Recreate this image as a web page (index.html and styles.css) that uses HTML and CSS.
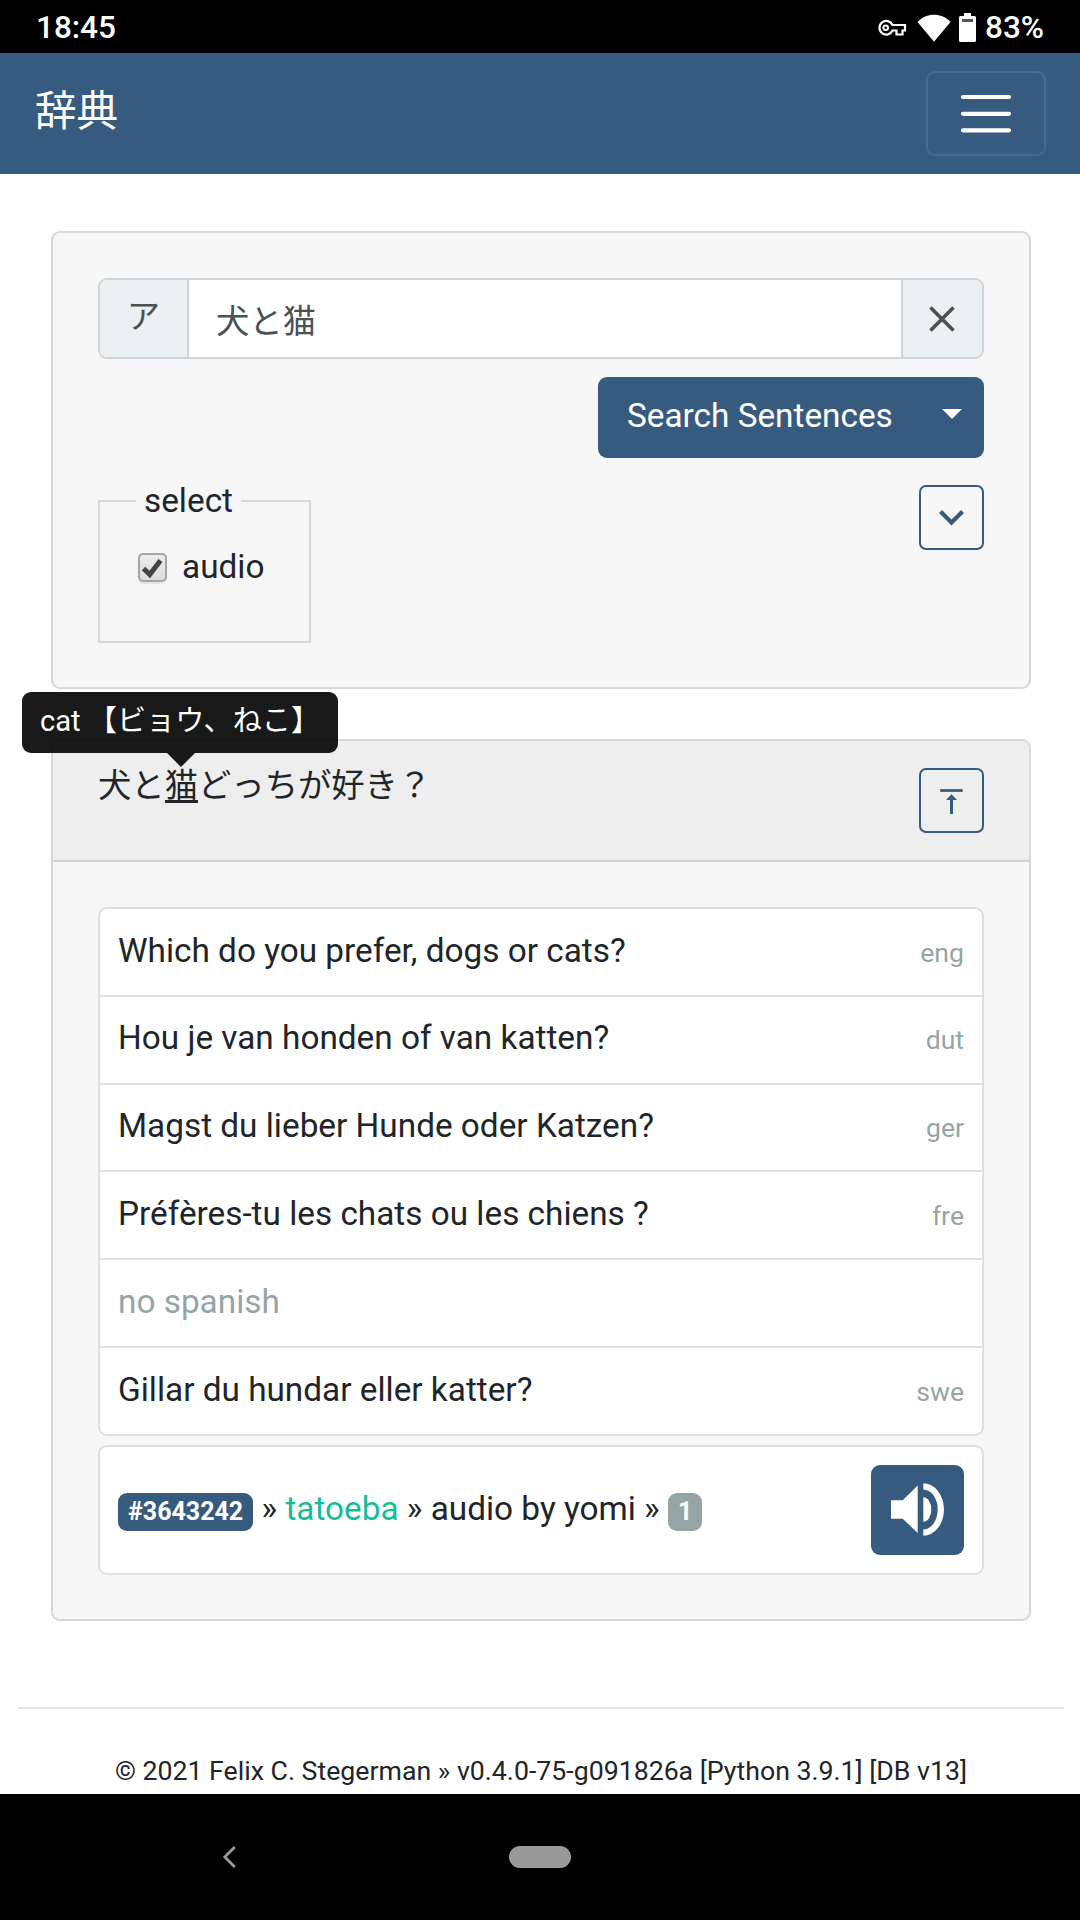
FILE: index.html
```html
<!DOCTYPE html>
<html lang="ja">
<head>
<meta charset="utf-8">
<title>辞典</title>
<link rel="stylesheet" href="styles.css">
</head>
<body>
<div class="statusbar">
  <span class="clock">18:45</span>
  <div class="status-icons">
    <svg class="key" viewBox="0 0 30 18"><path d="M15.500 6H28V11.500H25.500V15.500H19.500V11.500H15.500A6.800 6.800 0 1 1 15.500 6Z" fill="none" stroke="#fff" stroke-width="2.200"/><circle cx="8.700" cy="8.800" r="2.300" fill="none" stroke="#fff" stroke-width="2"/></svg>
    <svg class="wifi" viewBox="0 0 34 28"><path d="M0.500 8C9.500-1.700 24.500-1.700 33.500 8L17 27.700Z" fill="#fff"/></svg>
    <svg class="battery" viewBox="0 0 17 29"><path d="M5 0H12V3H15.500Q17 3 17 4.500V27.500Q17 29 15.500 29H1.500Q0 29 0 27.500V4.500Q0 3 1.500 3H5Z" fill="#fff"/><path d="M3 6H14V9H3Z" fill="#555"/></svg>
    <span class="percent">83%</span>
  </div>
</div>
<nav class="navbar">
  <a class="brand">辞典</a>
  <button class="toggler" aria-label="menu"><svg viewBox="0 0 62 62"><path d="M8 14H54M8 30.800H54M8 47.300H54" stroke="#fff" stroke-width="4.200" stroke-linecap="round"/></svg></button>
</nav>
<main>
  <section class="card search">
    <div class="input-group">
      <span class="addon kana">ア</span>
      <span class="query">犬と猫</span>
      <button class="addon clear" aria-label="clear"><svg viewBox="0 0 26 26"><path d="M1.500 1.500L24.500 24.500M24.500 1.500L1.500 24.500" stroke="#495057" stroke-width="3.600"/></svg></button>
    </div>
    <div class="search-row">
      <div class="btn-group"><button class="search-btn">Search Sentences</button><button class="caret" aria-label="more"></button></div>
    </div>
    <div class="options">
      <fieldset>
        <legend>select</legend>
        <label><span class="checkbox"><svg viewBox="0 0 29 29"><path d="M5.500 15.500L11.800 21.500L22.500 7.500" fill="none" stroke="#444" stroke-width="5"/></svg></span>audio</label>
      </fieldset>
      <button class="outline-btn" aria-label="expand"><svg viewBox="0 0 65 65"><path d="M21.500 26.500L32.500 37.500L43.500 26.500" fill="none" stroke="#375a7f" stroke-width="4.200"/></svg></button>
    </div>
  </section>

  <section class="card result">
    <header>
      <div class="sentence">犬と<span class="word">猫<span class="tooltip">cat 【ビョウ、ねこ】</span></span>どっちが好き？</div>
      <button class="outline-btn" aria-label="top"><svg viewBox="0 0 65 65"><path d="M21.200 22.500H43.700" stroke="#375a7f" stroke-width="2.800"/><path d="M31 46V32H27L32.500 26.300L38 32H34V46Z" fill="#375a7f"/></svg></button>
    </header>
    <div class="card-body">
      <ul class="translations">
        <li>Which do you prefer, dogs or cats?<small>eng</small></li>
        <li>Hou je van honden of van katten?<small>dut</small></li>
        <li>Magst du lieber Hunde oder Katzen?<small>ger</small></li>
        <li>Préfères-tu les chats ou les chiens ?<small>fre</small></li>
        <li class="missing">no spanish</li>
        <li>Gillar du hundar eller katter?<small>swe</small></li>
      </ul>
      <div class="source">
        <div class="meta"><span class="badge">#3643242</span> » <a>tatoeba</a> » audio by yomi » <span class="badge grey">1</span></div>
        <button class="play" aria-label="play"><svg viewBox="0 0 93 90"><path d="M20 35.300H31.700L46.700 20.500V67.900L31.700 53.700H20Z" fill="#fff"/><path d="M52.300 32.300A8 12.200 0 0 1 52.300 56.700Z" fill="#fff"/><path d="M52.300 18.300A20.700 26.200 0 0 1 52.300 70.700V64.500A14.400 20 0 0 0 52.300 24.500Z" fill="#fff"/></svg></button>
      </div>
    </div>
  </section>
</main>
<footer>© 2021 Felix C. Stegerman » v0.4.0-75-g091826a [Python 3.9.1] [DB v13]</footer>
<div class="sysnav">
  <svg viewBox="0 0 14 22"><path d="M12.800 1L2.800 11L12.800 21" fill="none" stroke="#999" stroke-width="2.800"/></svg>
  <span class="pill"></span>
</div>
</body>
</html>
```

FILE: styles.css
```css
* { box-sizing: border-box; }
body {
  margin: 0;
  width: 1080px;
  height: 1920px;
  overflow: hidden;
  display: flex;
  flex-direction: column;
  background: #fff;
  color: #212529;
  font: 33.35px/49.5px Roboto, "Noto Sans CJK JP", sans-serif;
}
button {
  border: 0;
  padding: 0;
  background: none;
  color: inherit;
  font: inherit;
}
svg { display: block; }

.statusbar {
  height: 53px;
  padding: 2px 36px 0 36px;
  display: flex;
  align-items: center;
  justify-content: space-between;
  background: #000;
  color: #fff;
  font-size: 31.5px;
  font-weight: 500;
}
.status-icons { display: flex; align-items: center; }
.key { width: 30px; height: 18px; margin-right: 10px; }
.wifi { width: 34px; height: 28px; margin-right: 8px; }
.battery { width: 17px; height: 29px; margin-right: 9px; }

.navbar {
  height: 121px;
  padding: 0 34px 0 35px;
  display: flex;
  align-items: center;
  justify-content: space-between;
  background: #375a7f;
}
.brand { color: #fff; font-size: 41.6px; padding-bottom: 3px; }
.toggler {
  width: 120px;
  height: 85px;
  display: flex;
  align-items: center;
  justify-content: center;
  border: 2px solid rgba(255, 255, 255, .1);
  border-radius: 9px;
}
.toggler svg { width: 62px; height: 62px; }

main { padding: 57px 49px 0 51px; }
.card {
  border: 2px solid #d8d8d8;
  border-radius: 9px;
  background: #f7f7f7;
}
.search { height: 458px; padding: 45px; }
.input-group {
  height: 81px;
  display: flex;
  border: 2px solid #ced4da;
  border-radius: 9px;
  overflow: hidden;
  background: #fff;
  color: #495057;
}
.addon { background: #ecf0f1; }
.kana {
  width: 89px;
  padding-top: 12px;
  border-right: 2px solid #ced4da;
  text-align: center;
}
.query { flex: 1; padding: 17px 27px; }
.clear {
  width: 81px;
  padding-right: 1px;
  display: flex;
  align-items: center;
  justify-content: center;
  border-left: 2px solid #ced4da;
}
.clear svg { width: 26px; height: 26px; }
.search-row { display: flex; justify-content: flex-end; margin-top: 18px; }
.btn-group {
  width: 386px;
  height: 81px;
  display: flex;
  border-radius: 9px;
  background: #375a7f;
  color: #fff;
}
.search-btn { padding: 0 0 4px 29px; flex: 1; text-align: left; }
.caret { width: 64px; display: flex; align-items: center; justify-content: center; }
.caret::before {
  content: "";
  margin: 0 0 7px -1px;
  border: 10px solid transparent;
  border-top-color: #fff;
  border-bottom: 0;
}
.options {
  display: flex;
  align-items: flex-start;
  justify-content: space-between;
  margin-top: 17px;
}
.options .outline-btn { margin-top: 10px; }
.outline-btn {
  width: 65px;
  height: 65px;
  border: 2px solid #375a7f;
  border-radius: 7px;
}
.outline-btn svg { width: 65px; height: 65px; margin: -2px; }
fieldset {
  width: 213px;
  height: 167px;
  margin: 1px 0 0;
  padding: 15px 0 0 38px;
  border: 2px solid #d8d8d8;
}
legend { padding: 0 8px; margin-left: -2px; }
label { display: flex; align-items: center; padding-top: 1px; }
.checkbox {
  width: 29px;
  height: 29px;
  margin: 2px 15px 0 0;
  border: 2px solid #a6a6a6;
  border-radius: 5px;
  background: linear-gradient(#ececec, #dcdcdc);
  box-shadow: 0 2px 1px #e4e4e4;
}
.checkbox svg { width: 29px; height: 29px; margin: -2px; }

.result { height: 882px; margin-top: 50px; }
.result header {
  height: 121px;
  padding: 27px 45px 0;
  display: flex;
  align-items: flex-start;
  justify-content: space-between;
  border-bottom: 2px solid #d2d2d2;
  border-radius: 7px 7px 0 0;
  background: #eee;
}
.sentence { margin-top: -7px; }
.word {
  position: relative;
  display: inline-block;
  height: 42px;
  border-bottom: 3px solid #212529;
  vertical-align: top;
}
.tooltip {
  position: absolute;
  left: -142.700px;
  top: -69px;
  width: 316px;
  height: 61px;
  padding: 8px 18px;
  border-radius: 9px;
  background: rgba(0, 0, 0, .9);
  color: #fff;
  font-size: 29.150px;
  line-height: 43px;
  white-space: nowrap;
}
.tooltip::after {
  content: "";
  position: absolute;
  left: 145px;
  top: 61px;
  border: 14px solid transparent;
  border-top-color: rgba(0, 0, 0, .9);
  border-bottom: 0;
}
.card-body { padding: 45px; }
.translations {
  height: 529px;
  margin: 0;
  padding: 0;
  display: flex;
  flex-direction: column;
  list-style: none;
  border: 2px solid #dfdfdf;
  border-radius: 9px;
  background: #fff;
}
.translations li {
  flex: 1;
  padding: 16.6px 18px 0;
  display: flex;
  align-items: baseline;
  justify-content: space-between;
}
.translations li + li { border-top: 2px solid #dfdfdf; }
.translations small { color: #95a5a6; font-size: 26.6px; }
.translations .missing { color: #95a5a6; }
.source {
  height: 130px;
  margin-top: 9px;
  padding: 18px;
  display: flex;
  justify-content: space-between;
  border: 2px solid #dfdfdf;
  border-radius: 9px;
  background: #fff;
}
.meta { padding-top: 19px; }
.meta a { color: #18bc9c; }
.badge {
  display: inline-block;
  padding: 6px 10px 7px;
  border-radius: 9px;
  background: #375a7f;
  color: #fff;
  font-size: 25px;
  font-weight: 700;
  line-height: 25px;
}
.grey { background: #95a5a6; }
.play { width: 93px; height: 90px; border-radius: 9px; background: #375a7f; }
.play svg { width: 93px; height: 90px; }

footer {
  margin: 86px 16px 0 18px;
  padding-top: 42px;
  height: 87px;
  border-top: 2px solid #e5e5e5;
  text-align: center;
  font-size: 26.7px;
  line-height: 40px;
}
.sysnav {
  flex: 1;
  padding-left: 222px;
  display: flex;
  align-items: center;
  background: #000;
}
.sysnav svg { width: 14px; height: 22px; }
.pill { width: 62px; height: 22px; margin-left: 273px; border-radius: 11px; background: #999; }
```
